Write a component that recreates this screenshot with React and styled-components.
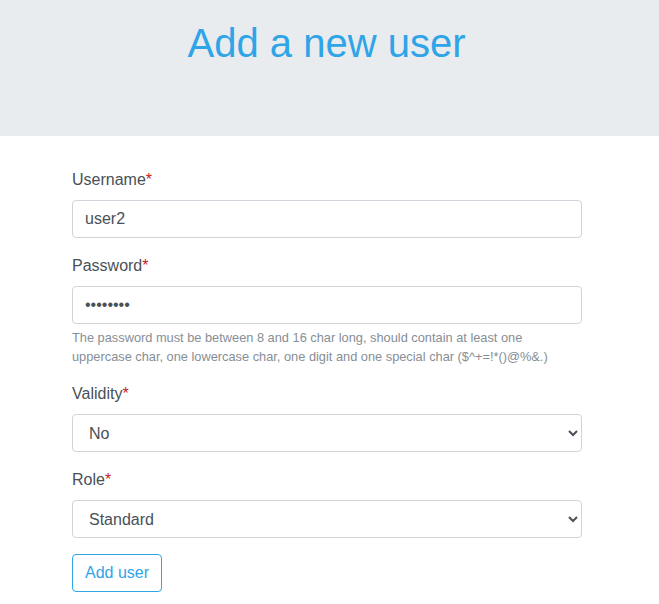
import styled, { createGlobalStyle } from "styled-components";

const Global = createGlobalStyle`
  body {
    margin: 0;
    background: #fff;
    font-family: "Liberation Sans", Arial, sans-serif;
    font-size: 16px;
    line-height: 1.5;
    color: #495057;
  }
  * { box-sizing: border-box; }
`;

const Header = styled.div`
  height: 136px;
  padding: 19px 6px 0 0;
  background: #e9ecef;
  text-align: center;
`;

const Title = styled.h1`
  margin: 0;
  font-size: 40px;
  font-weight: 400;
  line-height: 1.2;
  color: #2fa4e7;
`;

const Form = styled.form`
  width: 510px;
  margin: 32px 0 0 72px;
`;

const Group = styled.div`
  margin-bottom: 16px;
`;

const Label = styled.label`
  display: block;
  margin-bottom: 8px;
  line-height: 24px;
`;

const Required = styled.span`
  color: #c71c22;
`;

const Input = styled.input`
  display: block;
  width: 100%;
  height: 38px;
  padding: 6px 12px;
  font-family: inherit;
  font-size: 16px;
  color: #495057;
  background: #fff;
  border: 1px solid #ced4da;
  border-radius: 4px;
  outline: none;
`;

const Select = styled.select`
  display: block;
  width: 100%;
  height: 38px;
  padding: 6px 12px;
  font-family: inherit;
  font-size: 16px;
  color: #495057;
  background: #fff;
  border: 1px solid #ced4da;
  border-radius: 4px;
  outline: none;
`;

const Help = styled.small`
  display: block;
  margin-top: 4px;
  font-size: 12.8px;
  line-height: 19.2px;
  color: #868e96;
`;

const Button = styled.button`
  height: 38px;
  padding: 6px 12px;
  font-family: inherit;
  font-size: 16px;
  color: #2fa4e7;
  background: transparent;
  border: 1px solid #2fa4e7;
  border-radius: 4px;
`;

const Field = ({ label, children }) => (
  <Group>
    <Label>
      {label}
      <Required>*</Required>
    </Label>
    {children}
  </Group>
);

export default function App() {
  return (
    <>
      <Global />
      <Header>
        <Title>Add a new user</Title>
      </Header>
      <Form onSubmit={(e) => e.preventDefault()}>
        <Field label="Username">
          <Input type="text" defaultValue="user2" />
        </Field>
        <Field label="Password">
          <Input type="password" defaultValue="secret12" />
          <Help>
            The password must be between 8 and 16 char long, should contain at
            least one uppercase char, one lowercase char, one digit and one
            special char ($^+=!*()@%&.)
          </Help>
        </Field>
        <Field label="Validity">
          <Select defaultValue="no">
            <option value="no">No</option>
            <option value="yes">Yes</option>
          </Select>
        </Field>
        <Field label="Role">
          <Select defaultValue="standard">
            <option value="standard">Standard</option>
            <option value="admin">Admin</option>
          </Select>
        </Field>
        <Button type="submit">Add user</Button>
      </Form>
    </>
  );
}
